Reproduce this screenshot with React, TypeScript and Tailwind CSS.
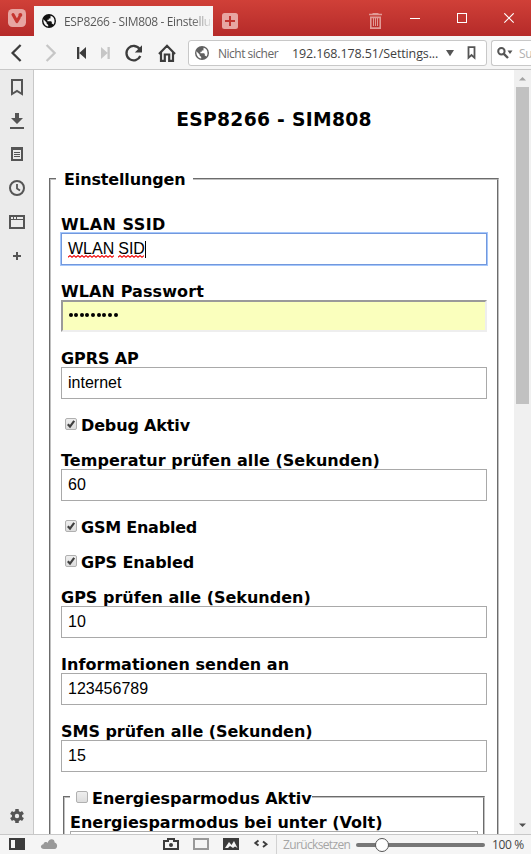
import React from 'react';

const ui = "font-['Open_Sans','Noto_Sans',sans-serif]";

function Globe({ color, bg }: { color: string; bg: string }) {
  return (
    <svg width="14" height="14" viewBox="0 0 14 14" className="shrink-0">
      <circle cx="7" cy="7" r="7" fill={color} />
      <path d="M1.4 5.2 L4.6 8.4 V9.6 L6.2 11 V12.4 C3.2 12 1.2 9.6 1.4 5.2Z" fill={bg} />
      <path d="M8.6 1.7 C11.4 2.4 12.7 4.7 12.5 7.4 C12.4 8.9 12 9.8 11.3 10.7 C11 10 10.6 9.8 9.8 9.7 V8 L9 7.2 H5.4 V5.8 H6.8 V4.4 H8.4 Z" fill={bg} />
    </svg>
  );
}

function TitleBar() {
  return (
    <header className="flex h-9 shrink-0 bg-gradient-to-b from-[#d04038] to-[#b52a29]">
      <div className="flex w-[34px] shrink-0 pl-2 pt-[9px]">
        <svg width="18" height="18" viewBox="0 0 18 18">
          <rect width="18" height="18" rx="4.5" fill="#e7a5a1" />
          <path d="M5 5.6 L8.9 12.6 L11.2 8.4" fill="none" stroke="#c5352f" strokeWidth="3.1" strokeLinecap="round" strokeLinejoin="round" />
          <circle cx="12.3" cy="5.9" r="2" fill="#c5352f" />
        </svg>
      </div>
      <div className="mt-1.5 flex h-[30px] w-[179px] shrink-0 items-center overflow-hidden bg-[#f5f5f5] pl-2">
        <Globe color="#111" bg="#f5f5f5" />
        <span className={`${ui} ml-2 w-[149px] overflow-hidden whitespace-nowrap bg-gradient-to-r from-[#555] from-85% to-[#f5f5f5] bg-clip-text pt-px text-[12px] leading-5 tracking-[-0.35px] text-transparent`}>
          ESP8266 - SIM808 - Einstellungen
        </span>
      </div>
      <svg className="ml-[9px] mt-[13px] shrink-0" width="16" height="16" viewBox="0 0 16 16">
        <rect width="16" height="16" rx="2.5" fill="#e7a5a1" />
        <path d="M3 8H13M8 3V13" stroke="#c23430" strokeWidth="2" />
      </svg>
      <svg className="ml-[131px] mt-[13px] shrink-0" width="13" height="16" viewBox="0 0 13 16">
        <path d="M0 1.5H13M3.5 .5H9.5" stroke="#e19a96" strokeWidth="1.6" />
        <path d="M1.8 4V15.1H11.2V4M1 4.4H12" fill="none" stroke="#e19a96" strokeWidth="1.6" />
        <path d="M4.5 5V13M6.5 5V13M8.5 5V13" stroke="#e19a96" strokeWidth="1" />
      </svg>
      <svg className="ml-[28px] mt-[13px] shrink-0" width="106" height="11" viewBox="0 0 106 11" fill="none" stroke="#fff">
        <path d="M0 5.5H10" />
        <rect x="47.5" y=".5" width="9" height="9" />
        <path d="M94.3 .3L103.7 9.7M103.7 .3L94.3 9.7" strokeWidth="1.1" />
      </svg>
    </header>
  );
}

function Toolbar() {
  return (
    <div className="flex h-[34px] shrink-0 border-b border-[#c8c8c8] bg-[#f5f5f5]">
      <svg width="188" height="33" viewBox="0 36 188 33" fill="none" className="shrink-0">
        <path d="M20.6 45L12.6 53L20.6 61" stroke="#3c3c3c" strokeWidth="2.3" />
        <path d="M46.6 45L54.6 53L46.6 61" stroke="#c6c6c6" strokeWidth="2.3" />
        <path d="M77 47H79.3V59H77ZM86 47V59L79.3 53Z" fill="#3c3c3c" />
        <path d="M107.5 47H109.8V59H107.5ZM101 47V59L107.7 53Z" fill="#c6c6c6" />
        <path d="M139.7 49.2A7.2 7.2 0 1 0 140.3 56" stroke="#3c3c3c" strokeWidth="2.3" />
        <path d="M142 45.3V52.5H134.8Z" fill="#3c3c3c" />
        <path d="M159 54L167 45.8L175 54M161 52.5V60.9H164.8V54.5H169.2V60.9H173V52.5" stroke="#3c3c3c" strokeWidth="2.2" />
      </svg>
      <div className="mt-1 flex h-[26px] w-[299px] shrink-0 items-center rounded-[3px] border border-[#c8c8c8] bg-white pl-1.5">
        <Globe color="#606060" bg="#fff" />
        <span className={`${ui} ml-[9px] w-[74px] whitespace-nowrap pt-0.5 text-[12px] tracking-[-0.5px] text-[#666]`}>Nicht sicher</span>
        <span className={`${ui} w-[154px] whitespace-nowrap pt-0.5 text-[12.5px] tracking-[-0.12px] text-[#3f3f3f]`}>192.168.178.51/Settings...</span>
        <svg width="30" height="14" viewBox="0 0 30 14" className="shrink-0">
          <path d="M0 4H8L4 10.3Z" fill="#555" />
          <path d="M22.5 1.2H28.5V11.8L25.5 9L22.5 11.8Z" fill="none" stroke="#555" strokeWidth="1.8" />
        </svg>
      </div>
      <div className="ml-1 mt-1 flex h-[26px] flex-1 items-center overflow-hidden rounded-l-[3px] border border-r-0 border-[#c8c8c8] bg-white pl-[5px]">
        <svg width="16" height="14" viewBox="0 0 16 14" className="shrink-0">
          <circle cx="4.4" cy="5.2" r="3.2" fill="none" stroke="#555" strokeWidth="2" />
          <path d="M6.6 7.6L11 12" stroke="#555" strokeWidth="2.4" />
          <path d="M10.5 4.5H15.5L13 8Z" fill="#555" />
        </svg>
        <span className={`${ui} ml-1.5 pt-0.5 text-[12px] tracking-[-0.3px] text-[#b0b0b0]`}>Su</span>
      </div>
    </div>
  );
}

function SidePanel() {
  return (
    <aside className="flex w-[34px] shrink-0 flex-col justify-between border-r border-[#c8c8c8] bg-[#ebebeb]">
      <svg width="33" height="200" viewBox="0 70 33 200" fill="none" stroke="#555">
        <path d="M12 80H22V94L17 91L12 94Z" strokeWidth="2" />
        <path d="M10 128H24" strokeWidth="2" />
        <path d="M15 113H19V118H23L17 124L11 118H15Z" fill="#555" stroke="none" />
        <path d="M12 148H22V160H12Z" strokeWidth="2" />
        <path d="M11 147H23V150H11Z" fill="#555" stroke="none" />
        <path d="M14 152.5H20M14 154.5H20M14 156.5H20" />
        <circle cx="17" cy="188" r="7" strokeWidth="2" />
        <path d="M17 184V188.5L20 190.5" strokeWidth="1.8" />
        <path d="M10 216H24V228H10Z" strokeWidth="2" />
        <path d="M10 219.5H24M13.5 216V219M16.5 216V219" strokeWidth="1" />
        <path d="M13 256H21M17 252V260" strokeWidth="2" />
      </svg>
      <svg width="33" height="30" viewBox="0 804 33 30">
        <g fill="#555">
          <circle cx="17" cy="816" r="5.2" />
          <rect x="15.2" y="809" width="3.6" height="14" rx=".6" />
          <rect x="15.2" y="809" width="3.6" height="14" rx=".6" transform="rotate(60 17 816)" />
          <rect x="15.2" y="809" width="3.6" height="14" rx=".6" transform="rotate(120 17 816)" />
        </g>
        <circle cx="17" cy="816" r="2.2" fill="#ebebeb" />
      </svg>
    </aside>
  );
}

function Label({ children, spacing = '' }: { children: React.ReactNode; spacing?: string }) {
  return <div className={`h-5 whitespace-nowrap leading-[23px] ${spacing}`}>{children}</div>;
}

const inputText = "font-['Liberation_Sans',Arial,sans-serif] font-normal text-[16px]";

function Field({ label, value, spacing }: { label: string; value: string; spacing?: string }) {
  return (
    <div className="mb-[15px]">
      <Label spacing={spacing}>{label}</Label>
      <div className={`${inputText} flex h-8 items-center border border-[#a9a9a9] bg-white pl-1.5`}>{value}</div>
    </div>
  );
}

function Box({ checked }: { checked?: boolean }) {
  return (
    <svg width="12" height="12" viewBox="0 0 12 12" className="shrink-0">
      <defs>
        <linearGradient id="boxFill" x1="0" y1="0" x2="0" y2="1">
          <stop offset="0" stopColor="#efefef" />
          <stop offset="1" stopColor="#dcdcdc" />
        </linearGradient>
      </defs>
      <rect x=".5" y=".5" width="11" height="11" rx="1.5" fill="url(#boxFill)" stroke="#b0b0b0" />
      {checked && <path d="M2.8 6.3L5 8.6L9.2 2.9" fill="none" stroke="#404040" strokeWidth="2.2" />}
    </svg>
  );
}

function Check({ label, spacing }: { label: string; spacing: string }) {
  return (
    <div className="mb-[15px] flex h-5 items-center pl-1">
      <Box checked />
      <span className={`ml-1 h-5 whitespace-nowrap leading-[23px] ${spacing}`}>{label}</span>
    </div>
  );
}

function Misspelled({ children, width }: { children: string; width: number }) {
  const peaks = Array.from({ length: Math.floor(width / 2) }, (_, i) => `L${i * 2 + 2} ${i % 2 ? 2.2 : 0.6}`).join('');
  return (
    <span className="relative">
      {children}
      <svg className="absolute left-0 top-[18px]" width={width} height="3" viewBox={`0 0 ${width} 3`}>
        <path d={`M0 2.2${peaks}`} fill="none" stroke="#f00000" strokeWidth="1.1" />
      </svg>
    </span>
  );
}

function Page() {
  return (
    <main className="min-w-0 flex-1 overflow-hidden bg-white pl-[15px] pr-[15px] font-['DejaVu_Sans',Verdana,sans-serif] text-[16px] font-bold text-black">
      <h3 className="mt-[38px] h-[61px] text-center text-[18.72px] leading-6 tracking-[0.3px]">ESP8266 - SIM808</h3>
      <fieldset className="h-[900px] border-2 border-[#c0c0c0] px-2.5 [border-style:groove]">
        <legend className="-ml-[5px] h-5 px-2 leading-[22px] tracking-[-0.14px]">Einstellungen</legend>
        <div className="pt-6">
          <div className="mb-[15px]">
            <Label spacing="tracking-[0.45px]">WLAN SSID</Label>
            <div className={`${inputText} flex h-8 items-center border border-[#7298dd] bg-white pl-1.5 outline outline-1 outline-[#a5c7fb]`}>
              <Misspelled width={46}>WLAN</Misspelled>
              <span className="w-1" />
              <Misspelled width={26}>SID</Misspelled>
              <span className="h-[17px] w-px bg-black" />
            </div>
          </div>
          <div className="mb-[15px]">
            <Label spacing="tracking-[0.1px]">WLAN Passwort</Label>
            <div className="flex h-8 items-center gap-[1.65px] border-2 border-b-[#eeeeee] border-l-[#9a9a9a] border-r-[#eeeeee] border-t-[#9a9a9a] bg-[#faffbd] pl-[5.5px]">
              {Array.from({ length: 9 }, (_, i) => (
                <span key={i} className="mb-[3px] size-1 rounded-full bg-black" />
              ))}
            </div>
          </div>
          <Field label="GPRS AP" value="internet" spacing="tracking-[-0.1px]" />
          <Check label="Debug Aktiv" spacing="tracking-[-0.15px]" />
          <Field label="Temperatur prüfen alle (Sekunden)" value="60" spacing="tracking-[0.04px]" />
          <Check label="GSM Enabled" spacing="tracking-[-0.23px]" />
          <Check label="GPS Enabled" spacing="tracking-[-0.12px]" />
          <Field label="GPS prüfen alle (Sekunden)" value="10" />
          <Field label="Informationen senden an" value="123456789" spacing="tracking-[0.04px]" />
          <Field label="SMS prüfen alle (Sekunden)" value="15" spacing="tracking-[-0.03px]" />
          <fieldset className="mx-0.5 h-[150px] border-2 border-[#c0c0c0] px-[5px] [border-style:groove]">
            <legend className="flex h-5 items-center pl-1.5">
              <Box />
              <span className="ml-1 h-5 whitespace-nowrap leading-[23px] tracking-[-0.05px]">Energiesparmodus Aktiv</span>
            </legend>
            <div className="pt-1">
              <Field label="Energiesparmodus bei unter (Volt)" value="" />
            </div>
          </fieldset>
        </div>
      </fieldset>
    </main>
  );
}

function Scrollbar() {
  return (
    <div className="flex w-[17px] shrink-0 flex-col items-center justify-between bg-[#f0f0f0]">
      <div className="flex flex-col items-center">
        <svg width="17" height="17" viewBox="0 0 17 17">
          <path d="M5 10.5L8.5 7L12 10.5Z" fill="#a3a3a3" />
        </svg>
        <div className="h-[317px] w-[13px] bg-[#c1c1c1]" />
      </div>
      <svg width="17" height="17" viewBox="0 0 17 17">
        <path d="M5 6.5L8.5 10L12 6.5Z" fill="#505050" />
      </svg>
    </div>
  );
}

function StatusBar() {
  return (
    <footer className="flex h-5 shrink-0 items-center border-t border-[#c8c8c8] bg-[#f5f5f5]">
      <svg width="276" height="19" viewBox="0 835 276 19" fill="none" className="shrink-0">
        <path d="M9 838H25V850H9Z" fill="#3c3c3c" />
        <path d="M11 840H15V848H11Z" fill="#f5f5f5" />
        <path d="M44 849C40 849 40 844.5 43.5 844.2C44 841.5 47 841.8 47.6 843C48.5 838 55 838 54.6 842.6C58 843 58 849 54.5 849Z" fill="#999" />
        <path d="M164 841H168V839H174V841H178V849H164Z" stroke="#3c3c3c" strokeWidth="2" />
        <circle cx="171" cy="845" r="2" fill="#3c3c3c" />
        <path d="M194 839H208V849H194Z" stroke="#999" strokeWidth="2" />
        <path d="M223 838H239V850H223Z" fill="#3c3c3c" />
        <path d="M225 848L229 842L231.5 845L234 841L237.5 848L235 846.5L233 848L230 846L228 848Z" fill="#f5f5f5" />
        <path d="M258.5 840.5L255.3 843L258.5 845.5M263 841.5L266.5 844.3L263 847" stroke="#3c3c3c" strokeWidth="1.9" />
      </svg>
      <div className={`${ui} flex h-full flex-1 items-center border-l border-[#d2d2d2] text-[12px] leading-none text-[#444]`}>
        <span className="ml-1.5 w-[73px] whitespace-nowrap tracking-[-0.65px] text-[#a5a5a5]">Zurücksetzen</span>
        <svg width="130" height="18" viewBox="0 0 130 18" className="shrink-0">
          <path d="M2 9H127" stroke="#777" strokeWidth="4" strokeLinecap="round" />
          <circle cx="26" cy="9" r="6.5" fill="#fff" stroke="#555" />
        </svg>
        <span className="ml-1.5 whitespace-nowrap tracking-[-0.35px]">100 %</span>
      </div>
    </footer>
  );
}

export default function App() {
  return (
    <div className="flex h-[854px] w-[531px] flex-col overflow-hidden">
      <TitleBar />
      <Toolbar />
      <div className="flex min-h-0 flex-1">
        <SidePanel />
        <Page />
        <Scrollbar />
      </div>
      <StatusBar />
    </div>
  );
}
